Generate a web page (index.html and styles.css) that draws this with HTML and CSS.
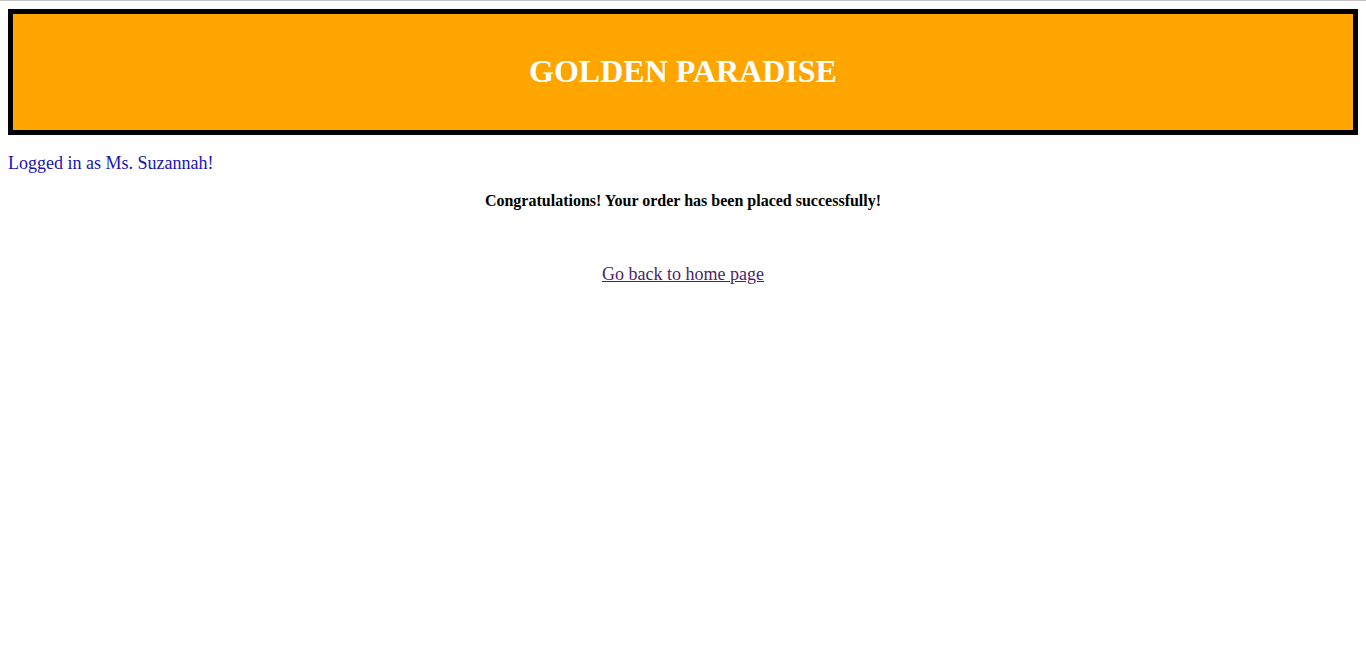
FILE: index.html
```html
<!DOCTYPE html>
<html>
<head>
<meta charset="utf-8">
<title>Golden Paradise</title>
<link rel="stylesheet" href="styles.css">
</head>
<body>
<div class="banner">
  <h1 class="title">GOLDEN PARADISE</h1>
</div>
<p class="user">Logged in as Ms. Suzannah!</p>
<p class="message">Congratulations! Your order has been placed successfully!</p>
<p class="back"><a class="home-link" href="#">Go back to home page</a></p>
</body>
</html>
```
FILE: styles.css
```css
html {
  border-top: 1px solid #c4c4c4;
  background: #ffffff;
}
body {
  margin: 8px;
  font-family: "Liberation Serif", "Times New Roman", serif;
}
.banner {
  border: 5px solid #000000;
  background: #ffa500;
  padding: 39px 0 40px;
}
.title {
  margin: 0;
  font-size: 32px;
  line-height: 37px;
  font-weight: bold;
  color: #ffffff;
  text-align: center;
}
.user {
  margin: 18px 0 0;
  font-size: 18px;
  line-height: 21px;
  color: #1a13b8;
}
.message {
  margin: 18px 0 0;
  font-size: 16px;
  line-height: 18px;
  font-weight: bold;
  text-align: center;
  color: #000000;
}
.back {
  margin: 54px 0 0;
  font-size: 18px;
  line-height: 21px;
  text-align: center;
}
.home-link {
  color: #4b1f6f;
  text-decoration: underline;
}
```
